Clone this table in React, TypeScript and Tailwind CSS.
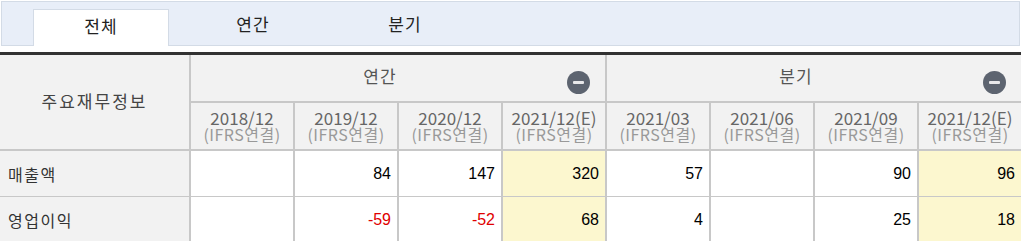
import React from 'react'

const kr = "font-['Noto_Sans_CJK_KR',sans-serif]"
const num = "font-['Liberation_Sans','Noto_Sans_CJK_KR',sans-serif]"

const periods = [
  { date: '2018/12', est: false },
  { date: '2019/12', est: false },
  { date: '2020/12', est: false },
  { date: '2021/12(E)', est: true },
  { date: '2021/03', est: false },
  { date: '2021/06', est: false },
  { date: '2021/09', est: false },
  { date: '2021/12(E)', est: true },
]

const rows = [
  { label: '매출액', values: ['', '84', '147', '320', '57', '', '90', '96'] },
  { label: '영업이익', values: ['', '-59', '-52', '68', '4', '', '25', '18'] },
]

const MinusCircle: React.FC = () => (
  <svg width="23" height="23" viewBox="0 0 23 23" className="absolute right-[15px] top-[16px]">
    <circle cx="11.5" cy="11.5" r="11.5" fill="#5d6470" />
    <rect x="6" y="10" width="11" height="3" rx="1" fill="#e8e8ea" />
  </svg>
)

const App: React.FC = () => {
  const tabs = ['전체', '연간', '분기']

  return (
    <div className={`w-[1021px] h-[241px] overflow-hidden bg-white ${kr}`}>
      {/* 탭 */}
      <div className="mx-px mt-px h-[45px] border border-[#d3dbe6] bg-[#e8eef8] flex items-end gap-4 pl-[31px]">
        {tabs.map((tab, i) => (
          <div
            key={tab}
            className={`w-[136px] h-[37px] flex items-center justify-center text-[17px] tracking-[1px] text-[#222] ${
              i === 0 ? 'bg-white border-l border-r border-t border-[#d3dbe6] -mb-px pb-[4px]' : 'pb-[5px]'
            }`}
          >
            {tab}
          </div>
        ))}
      </div>

      {/* 표 */}
      <div className="mt-[6px] border-t-[3px] border-[#333] grid grid-cols-[189px_repeat(8,104px)]">
        <div className="row-span-2 bg-[#f2f2f2] border-b-2 border-[#c8c8c8] flex items-center justify-center pb-[2px] text-[17px] tracking-[2px] text-[#444]">
          주요재무정보
        </div>
        <div className="col-span-4 relative h-[48px] bg-[#f2f2f2] border-l-2 border-b-2 border-[#c8c8c8] flex justify-center pr-[36px] pt-[8px] text-[17px] tracking-[1px] text-[#555]">
          연간
          <MinusCircle />
        </div>
        <div className="col-span-4 relative h-[48px] bg-[#f2f2f2] border-l-2 border-b-2 border-[#c8c8c8] flex justify-center pr-[36px] pt-[8px] text-[17px] tracking-[1px] text-[#555]">
          분기
          <MinusCircle />
        </div>

        {periods.map((p, i) => (
          <div
            key={i}
            className="h-[48px] bg-[#f2f2f2] border-l-2 border-b-2 border-[#c8c8c8] flex flex-col items-center justify-center pb-[1px] leading-[17px] whitespace-nowrap"
          >
            <span className="text-[17px] text-[#666]">{p.date}</span>
            <span className="text-[16px] tracking-[0.5px] text-[#999]">(IFRS연결)</span>
          </div>
        ))}

        {rows.map((row) => (
          <React.Fragment key={row.label}>
            <div className="h-[46px] bg-[#f2f2f2] border-b border-[#c8c8c8] flex items-center pl-[8px] text-[16px] tracking-[1.5px] text-[#333]">
              {row.label}
            </div>
            {row.values.map((v, i) => (
              <div
                key={i}
                className={`h-[46px] border-l-2 border-b border-[#c8c8c8] flex items-center justify-end pr-[6px] text-[16px] ${num} ${
                  periods[i].est ? 'bg-[#fcf7cf]' : 'bg-white'
                } ${v.startsWith('-') ? 'text-[#e00000]' : 'text-black'}`}
              >
                {v}
              </div>
            ))}
          </React.Fragment>
        ))}
      </div>
    </div>
  )
}

export default App
